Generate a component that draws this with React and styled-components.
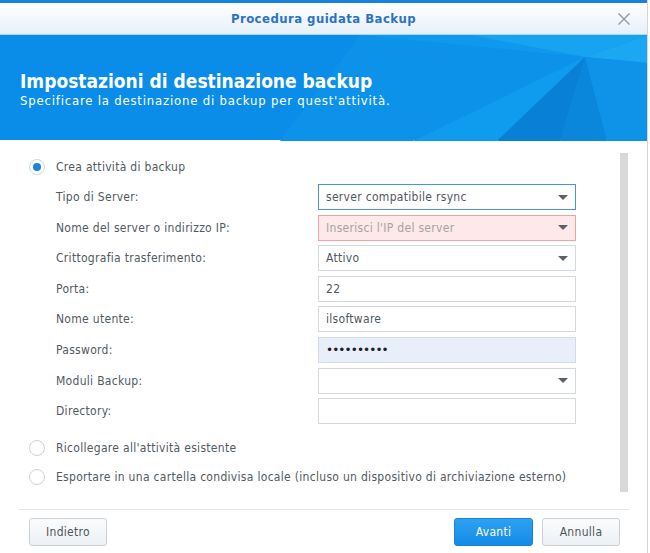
import React from 'react'
import styled, { createGlobalStyle } from 'styled-components'

const GlobalStyle = createGlobalStyle`
  html, body {
    margin: 0;
    padding: 0;
    background: #ffffff;
  }
  body {
    font-family: "DejaVu Sans Condensed", "DejaVu Sans", Verdana, sans-serif;
    font-size: 12px;
    letter-spacing: 0.3px;
    color: #505a62;
  }
`

const Window = styled.div`
  width: 647px;
  height: 553px;
  border-right: 1px solid #d2d6da;
  display: flex;
  flex-direction: column;
  background: #fff;
  overflow: hidden;
`

const TitleBar = styled.div`
  height: 31px;
  border-top: 3px solid #1583de;
  border-bottom: 1px solid #a9d6f6;
  background: linear-gradient(to bottom, #ffffff, #e5f0fa);
  display: flex;
  align-items: center;
  justify-content: center;
  position: relative;
  h1 {
    margin: 0;
    font-size: 13px;
    font-weight: bold;
    letter-spacing: 0.45px;
    color: #2c72c4;
  }
`

const CloseButton = styled.button`
  position: absolute;
  right: 16px;
  top: 9px;
  width: 14px;
  height: 14px;
  padding: 0;
  border: none;
  background: none;
  display: flex;
`

const Banner = styled.div`
  height: 106px;
  background: #0a8de8;
  position: relative;
  display: flex;
  flex-direction: column;
  justify-content: center;
  padding-left: 20px;
  color: #fff;
  svg {
    position: absolute;
    inset: 0;
  }
  h2 {
    position: relative;
    margin: 4px 0 0;
    font-size: 19px;
    font-weight: bold;
    letter-spacing: 0;
    line-height: 22px;
  }
  p {
    position: relative;
    margin: 0;
    font-size: 13px;
    letter-spacing: 0.8px;
    line-height: 17px;
  }
`

const Body = styled.div`
  flex: 1;
  display: flex;
  padding: 14px 19px 0 29px;
`

const Content = styled.div`
  flex: 1;
  display: flex;
  flex-direction: column;
`

const ScrollTrack = styled.div`
  width: 8px;
  height: 339px;
  margin-top: -1px;
  background: #d9d9d9;
`

const RadioRow = styled.label`
  height: 26px;
  display: flex;
  align-items: center;
  gap: 11px;
  margin-top: ${p => p.$top || 0}px;
  color: #505a62;
  white-space: nowrap;
`

const Radio = styled.span`
  flex: none;
  width: 16px;
  height: 16px;
  box-sizing: border-box;
  border-radius: 50%;
  border: 1px solid ${p => (p.$checked ? '#c9d9ea' : '#cdd2d7')};
  background: #fff;
  display: flex;
  align-items: center;
  justify-content: center;
  &::after {
    content: '';
    width: 8px;
    height: 8px;
    border-radius: 50%;
    background: ${p => (p.$checked ? '#1b84e2' : 'transparent')};
  }
`

const Fields = styled.div`
  display: flex;
  flex-direction: column;
  gap: 4.6px;
  margin: 4px 0 0 27px;
`

const FieldRow = styled.div`
  display: grid;
  grid-template-columns: 262px 258px;
  align-items: center;
  height: 26px;
  white-space: nowrap;
`

const Input = styled.div`
  height: 26px;
  box-sizing: border-box;
  border: 1px solid ${p => p.$border || '#d3d9de'};
  background: ${p => p.$bg || '#fff'};
  display: flex;
  align-items: center;
  padding: 0 6px 0 7px;
  color: ${p => (p.$muted ? '#a7a2a2' : '#50585e')};
  span {
    flex: 1;
  }
`

const Dots = styled.span`
  color: #1e2226;
  font-family: "DejaVu Sans", sans-serif;
  font-size: 12px;
  letter-spacing: -0.9px;
`

const Caret = styled.i`
  width: 0;
  height: 0;
  border-left: 5px solid transparent;
  border-right: 5px solid transparent;
  border-top: 5px solid #5a6167;
  margin-right: 1px;
`

const Footer = styled.div`
  margin: 17px 18px 0 19px;
  border-top: 1px solid #e4e6e8;
  padding: 8px 9px 7px 10px;
  display: flex;
  align-items: center;
  gap: 9px;
`

const Spacer = styled.div`
  flex: 1;
`

const Button = styled.button`
  width: ${p => p.$w || 78}px;
  height: 28px;
  box-sizing: border-box;
  border-radius: 3px;
  font-family: inherit;
  font-size: 12px;
  letter-spacing: 0.3px;
  border: 1px solid ${p => (p.$primary ? '#1683dc' : '#c9d1d8')};
  background: ${p =>
    p.$primary
      ? 'linear-gradient(to bottom, #2ea1f2, #138be6)'
      : 'linear-gradient(to bottom, #fbfcfd, #edf1f4)'};
  color: ${p => (p.$primary ? '#fff' : '#4e565c')};
`

const fields = [
  { label: 'Tipo di Server:', value: 'server compatibile rsync', select: true, border: '#4a94d6' },
  { label: 'Nome del server o indirizzo IP:', value: "Inserisci l'IP del server", select: true, border: '#efa2a2', bg: '#fde9e9', muted: true },
  { label: 'Crittografia trasferimento:', value: 'Attivo', select: true },
  { label: 'Porta:', value: '22' },
  { label: 'Nome utente:', value: 'ilsoftware' },
  { label: 'Password:', password: true, bg: '#e8effb', border: '#d4dbe3' },
  { label: 'Moduli Backup:', value: '', select: true },
  { label: 'Directory:', value: '' },
]

const BannerArt = () => (
  <svg width="648" height="106" viewBox="0 0 648 106" preserveAspectRatio="none">
    <polygon points="280,106 360,0 585,22 413,106" fill="#0d92ea" />
    <polygon points="360,0 470,0 585,22" fill="#1098ed" />
    <polygon points="470,0 648,0 585,22" fill="#18a3f1" />
    <polygon points="585,22 648,0 648,28" fill="#1ca7f3" />
    <polygon points="413,106 585,22 497,106" fill="#0f9bee" />
    <polygon points="497,106 585,22 560,106" fill="#0880d6" />
    <polygon points="560,106 585,22 607,106" fill="#0a86db" />
    <polygon points="585,22 648,28 648,106 607,106" fill="#0e93e9" />
  </svg>
)

const App = () => {
  return (
    <>
      <GlobalStyle />
      <Window>
        <TitleBar>
          <h1>Procedura guidata Backup</h1>
          <CloseButton aria-label="Chiudi">
            <svg width="14" height="14" viewBox="0 0 14 14">
              <path d="M1.5 1.5 L12.5 12.5 M12.5 1.5 L1.5 12.5" stroke="#8f9aa3" strokeWidth="1.4" />
            </svg>
          </CloseButton>
        </TitleBar>
        <Banner>
          <BannerArt />
          <h2>Impostazioni di destinazione backup</h2>
          <p>Specificare la destinazione di backup per quest'attività.</p>
        </Banner>
        <Body>
          <Content>
            <RadioRow>
              <Radio $checked />
              Crea attività di backup
            </RadioRow>
            <Fields>
              {fields.map((f, i) => (
                <FieldRow key={i}>
                  <span>{f.label}</span>
                  <Input $border={f.border} $bg={f.bg} $muted={f.muted}>
                    {f.password ? <Dots>••••••••••</Dots> : <span>{f.value}</span>}
                    {f.select && <Caret />}
                  </Input>
                </FieldRow>
              ))}
            </Fields>
            <RadioRow $top={11}>
              <Radio />
              Ricollegare all'attività esistente
            </RadioRow>
            <RadioRow $top={3}>
              <Radio />
              Esportare in una cartella condivisa locale (incluso un dispositivo di archiviazione esterno)
            </RadioRow>
          </Content>
          <ScrollTrack />
        </Body>
        <Footer>
          <Button>Indietro</Button>
          <Spacer />
          <Button $primary $w={79}>Avanti</Button>
          <Button>Annulla</Button>
        </Footer>
      </Window>
    </>
  )
}

export default App
